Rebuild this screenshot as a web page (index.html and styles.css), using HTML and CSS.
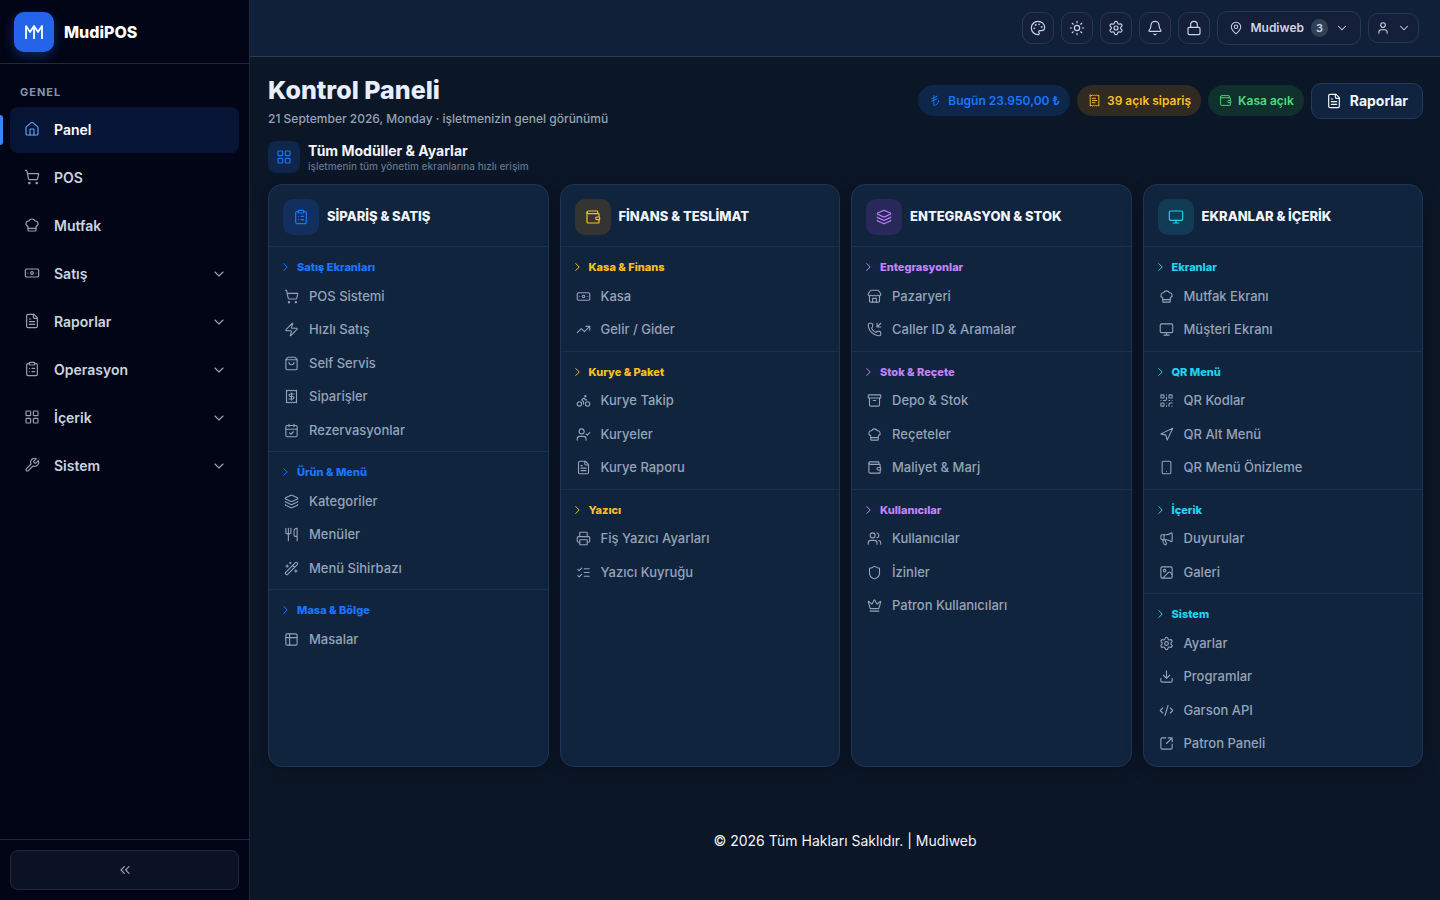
FILE: index.html
```html
<!DOCTYPE html>
<html lang="tr">
<head>
<meta charset="utf-8">
<meta name="viewport" content="width=device-width, initial-scale=1">
<title>MudiPOS – Kontrol Paneli</title>
<link rel="stylesheet" href="styles.css">
</head>
<body>
<svg class="sprite" aria-hidden="true">
  <symbol id="house" viewBox="0 0 24 24"><path d="M15 21v-8a1 1 0 0 0-1-1h-4a1 1 0 0 0-1 1v8"/><path d="M3 10a2 2 0 0 1 .709-1.528l7-5.999a2 2 0 0 1 2.582 0l7 5.999A2 2 0 0 1 21 10v9a2 2 0 0 1-2 2H5a2 2 0 0 1-2-2z"/></symbol>
  <symbol id="cart" viewBox="0 0 24 24"><circle cx="8" cy="21" r="1"/><circle cx="19" cy="21" r="1"/><path d="M2.05 2.05h2l2.66 12.42a2 2 0 0 0 2 1.58h9.78a2 2 0 0 0 1.95-1.57l1.65-7.43H5.12"/></symbol>
  <symbol id="chef" viewBox="0 0 24 24"><path d="M17 21a1 1 0 0 0 1-1v-5.35c0-.457.316-.844.727-1.041a4 4 0 0 0-2.134-7.589 5 5 0 0 0-9.186 0 4 4 0 0 0-2.134 7.588c.411.198.727.585.727 1.041V20a1 1 0 0 0 1 1Z"/><path d="M6 17h12"/></symbol>
  <symbol id="banknote" viewBox="0 0 24 24"><rect width="20" height="12" x="2" y="6" rx="2"/><circle cx="12" cy="12" r="2"/><path d="M6 12h.01M18 12h.01"/></symbol>
  <symbol id="file" viewBox="0 0 24 24"><path d="M15 2H6a2 2 0 0 0-2 2v16a2 2 0 0 0 2 2h12a2 2 0 0 0 2-2V7Z"/><path d="M14 2v4a2 2 0 0 0 2 2h4M10 9H8M16 13H8M16 17H8"/></symbol>
  <symbol id="clipboard" viewBox="0 0 24 24"><rect width="8" height="4" x="8" y="2" rx="1"/><path d="M16 4h2a2 2 0 0 1 2 2v14a2 2 0 0 1-2 2H6a2 2 0 0 1-2-2V6a2 2 0 0 1 2-2h2M12 11h4M12 16h4M8 11h.01M8 16h.01"/></symbol>
  <symbol id="grid" viewBox="0 0 24 24"><rect width="7" height="7" x="3" y="3" rx="1"/><rect width="7" height="7" x="14" y="3" rx="1"/><rect width="7" height="7" x="14" y="14" rx="1"/><rect width="7" height="7" x="3" y="14" rx="1"/></symbol>
  <symbol id="wrench" viewBox="0 0 24 24"><path d="M14.7 6.3a1 1 0 0 0 0 1.4l1.6 1.6a1 1 0 0 0 1.4 0l3.77-3.77a6 6 0 0 1-7.94 7.94l-6.91 6.91a2.12 2.12 0 0 1-3-3l6.91-6.91a6 6 0 0 1 7.94-7.94l-3.76 3.76z"/></symbol>
  <symbol id="down" viewBox="0 0 24 24"><path d="m6 9 6 6 6-6"/></symbol>
  <symbol id="right" viewBox="8 5 8 14"><path d="m9 18 6-6-6-6"/></symbol>
  <symbol id="collapse" viewBox="0 0 24 24"><path d="m11 17-5-5 5-5M18 17l-5-5 5-5"/></symbol>
  <symbol id="palette" viewBox="0 0 24 24"><path d="M12 22a1 1 0 0 1 0-20 10 9 0 0 1 10 9 5 5 0 0 1-5 5h-2.25a1.75 1.75 0 0 0-1.4 2.8l.3.4a1.75 1.75 0 0 1-1.4 2.8z"/><circle cx="13.5" cy="6.5" r=".5"/><circle cx="17.5" cy="10.5" r=".5"/><circle cx="6.5" cy="12.5" r=".5"/><circle cx="8.5" cy="7.5" r=".5"/></symbol>
  <symbol id="sun" viewBox="0 0 24 24"><circle cx="12" cy="12" r="4"/><path d="M12 2v2M12 20v2M4.93 4.93l1.41 1.41M17.66 17.66l1.41 1.41M2 12h2M20 12h2M6.34 17.66l-1.41 1.41M19.07 4.93l-1.41 1.41"/></symbol>
  <symbol id="settings" viewBox="0 0 24 24"><path d="M9.671 4.136a2.34 2.34 0 0 1 4.659 0 2.34 2.34 0 0 0 3.319 1.915 2.34 2.34 0 0 1 2.33 4.033 2.34 2.34 0 0 0 0 3.831 2.34 2.34 0 0 1-2.33 4.033 2.34 2.34 0 0 0-3.319 1.915 2.34 2.34 0 0 1-4.659 0 2.34 2.34 0 0 0-3.32-1.915 2.34 2.34 0 0 1-2.33-4.033 2.34 2.34 0 0 0 0-3.831A2.34 2.34 0 0 1 6.35 6.051a2.34 2.34 0 0 0 3.319-1.915"/><circle cx="12" cy="12" r="3"/></symbol>
  <symbol id="bell" viewBox="0 0 24 24"><path d="M10.268 21a2 2 0 0 0 3.464 0"/><path d="M3.262 15.326A1 1 0 0 0 4 17h16a1 1 0 0 0 .74-1.673C19.41 13.956 18 12.499 18 8A6 6 0 0 0 6 8c0 4.499-1.411 5.956-2.738 7.326"/></symbol>
  <symbol id="lock" viewBox="0 0 24 24"><rect width="18" height="11" x="3" y="11" rx="2"/><path d="M7 11V7a5 5 0 0 1 10 0v4"/></symbol>
  <symbol id="pin" viewBox="0 0 24 24"><path d="M20 10c0 4.993-5.539 10.193-7.399 11.799a1 1 0 0 1-1.202 0C9.539 20.193 4 14.993 4 10a8 8 0 0 1 16 0"/><circle cx="12" cy="10" r="3"/></symbol>
  <symbol id="user" viewBox="0 0 24 24"><path d="M19 21v-2a4 4 0 0 0-4-4H9a4 4 0 0 0-4 4v2"/><circle cx="12" cy="7" r="4"/></symbol>
  <symbol id="lira" viewBox="0 0 24 24"><path d="M15 4 5 9M15 8.5l-10 5M18 12a9 9 0 0 1-9 9V3"/></symbol>
  <symbol id="receipt-text" viewBox="0 0 24 24"><path d="M4 2v20l2-1 2 1 2-1 2 1 2-1 2 1 2-1 2 1V2l-2 1-2-1-2 1-2-1-2 1-2-1-2 1Z"/><path d="M14 8H8M16 12H8M13 16H8"/></symbol>
  <symbol id="receipt" viewBox="0 0 24 24"><path d="M4 2v20l2-1 2 1 2-1 2 1 2-1 2 1 2-1 2 1V2l-2 1-2-1-2 1-2-1-2 1-2-1-2 1Z"/><path d="M16 8h-6a2 2 0 1 0 0 4h4a2 2 0 1 1 0 4H8M12 17.5v-11"/></symbol>
  <symbol id="wallet" viewBox="0 0 24 24"><path d="M19 7V4a1 1 0 0 0-1-1H5a2 2 0 0 0 0 4h15a1 1 0 0 1 1 1v4h-3a2 2 0 0 0 0 4h3a1 1 0 0 0 1-1v-2a1 1 0 0 0-1-1"/><path d="M3 5v14a2 2 0 0 0 2 2h15a1 1 0 0 0 1-1v-4"/></symbol>
  <symbol id="zap" viewBox="0 0 24 24"><path d="M4 14a1 1 0 0 1-.78-1.63l9.9-10.2a.5.5 0 0 1 .86.46l-1.92 6.02A1 1 0 0 0 13 10h7a1 1 0 0 1 .78 1.63l-9.9 10.2a.5.5 0 0 1-.86-.46l1.92-6.02A1 1 0 0 0 11 14z"/></symbol>
  <symbol id="bag" viewBox="0 0 24 24"><path d="M16 10a4 4 0 0 1-8 0M3.103 6.034h17.794"/><path d="M3.4 5.467a2 2 0 0 0-.4 1.2V20a2 2 0 0 0 2 2h14a2 2 0 0 0 2-2V6.667a2 2 0 0 0-.4-1.2l-2-2.667A2 2 0 0 0 17 2H7a2 2 0 0 0-1.6.8z"/></symbol>
  <symbol id="calendar" viewBox="0 0 24 24"><path d="M8 2v4M16 2v4M3 10h18M9 16l2 2 4-4"/><rect width="18" height="18" x="3" y="4" rx="2"/></symbol>
  <symbol id="layers" viewBox="0 0 24 24"><path d="M12.83 2.18a2 2 0 0 0-1.66 0L2.6 6.08a1 1 0 0 0 0 1.83l8.58 3.91a2 2 0 0 0 1.66 0l8.58-3.9a1 1 0 0 0 0-1.83z"/><path d="M2 12a1 1 0 0 0 .58.91l8.6 3.91a2 2 0 0 0 1.65 0l8.58-3.9A1 1 0 0 0 22 12"/><path d="M2 17a1 1 0 0 0 .58.91l8.6 3.91a2 2 0 0 0 1.65 0l8.58-3.9A1 1 0 0 0 22 17"/></symbol>
  <symbol id="utensils" viewBox="0 0 24 24"><path d="M3 2v7c0 1.1.9 2 2 2h4a2 2 0 0 0 2-2V2M7 2v20M21 15V2a5 5 0 0 0-5 5v6c0 1.1.9 2 2 2h3Zm0 0v7"/></symbol>
  <symbol id="wand" viewBox="0 0 24 24"><path d="m21.64 3.64-1.28-1.28a1.21 1.21 0 0 0-1.72 0L2.36 18.64a1.21 1.21 0 0 0 0 1.72l1.28 1.28a1.2 1.2 0 0 0 1.72 0L21.64 5.36a1.2 1.2 0 0 0 0-1.72M14 7l3 3M5 6v4M19 14v4M10 2v2M7 8H3M21 16h-4M11 3H9"/></symbol>
  <symbol id="table" viewBox="0 0 24 24"><rect width="18" height="18" x="3" y="3" rx="2"/><path d="M3 9h18M9 3v18"/></symbol>
  <symbol id="trend" viewBox="0 0 24 24"><path d="M16 7h6v6"/><path d="m22 7-8.5 8.5-5-5L2 17"/></symbol>
  <symbol id="bike" viewBox="0 0 24 24"><circle cx="18.5" cy="17.5" r="3.5"/><circle cx="5.5" cy="17.5" r="3.5"/><circle cx="15" cy="5" r="1"/><path d="M12 17.5V14l-3-3 4-3 2 3h2"/></symbol>
  <symbol id="user-check" viewBox="0 0 24 24"><path d="m16 11 2 2 4-4M16 21v-2a4 4 0 0 0-4-4H6a4 4 0 0 0-4 4v2"/><circle cx="9" cy="7" r="4"/></symbol>
  <symbol id="printer" viewBox="0 0 24 24"><path d="M6 18H4a2 2 0 0 1-2-2v-5a2 2 0 0 1 2-2h16a2 2 0 0 1 2 2v5a2 2 0 0 1-2 2h-2M6 9V3a1 1 0 0 1 1-1h10a1 1 0 0 1 1 1v6"/><rect width="12" height="8" x="6" y="14" rx="1"/></symbol>
  <symbol id="checks" viewBox="0 0 24 24"><path d="m3 17 2 2 4-4M3 7l2 2 4-4M13 6h8M13 12h8M13 18h8"/></symbol>
  <symbol id="store" viewBox="0 0 24 24"><path d="M15 21v-5a1 1 0 0 0-1-1h-4a1 1 0 0 0-1 1v5"/><path d="M17.774 10.31a1.12 1.12 0 0 0-1.549 0 2.5 2.5 0 0 1-3.451 0 1.12 1.12 0 0 0-1.548 0 2.5 2.5 0 0 1-3.452 0 1.12 1.12 0 0 0-1.549 0 2.5 2.5 0 0 1-3.77-3.248l2.889-4.184A2 2 0 0 1 7 2h10a2 2 0 0 1 1.653.873l2.895 4.192a2.5 2.5 0 0 1-3.774 3.244"/><path d="M4 10.95V19a2 2 0 0 0 2 2h12a2 2 0 0 0 2-2v-8.05"/></symbol>
  <symbol id="phone" viewBox="0 0 24 24"><path d="M16 2v6h6M22 2l-6 6"/><path d="M13.832 16.568a1 1 0 0 0 1.213-.303l.355-.465A2 2 0 0 1 17 15h3a2 2 0 0 1 2 2v3a2 2 0 0 1-2 2A18 18 0 0 1 2 4a2 2 0 0 1 2-2h3a2 2 0 0 1 2 2v3a2 2 0 0 1-.8 1.6l-.468.351a1 1 0 0 0-.292 1.233 14 14 0 0 0 6.392 6.384"/></symbol>
  <symbol id="archive" viewBox="0 0 24 24"><rect width="20" height="5" x="2" y="3" rx="1"/><path d="M4 8v11a2 2 0 0 0 2 2h12a2 2 0 0 0 2-2V8M10 12h4"/></symbol>
  <symbol id="users" viewBox="0 0 24 24"><path d="M16 21v-2a4 4 0 0 0-4-4H6a4 4 0 0 0-4 4v2M16 3.128a4 4 0 0 1 0 7.744M22 21v-2a4 4 0 0 0-3-3.87"/><circle cx="9" cy="7" r="4"/></symbol>
  <symbol id="shield" viewBox="0 0 24 24"><path d="M20 13c0 5-3.5 7.5-7.66 8.95a1 1 0 0 1-.67-.01C7.5 20.5 4 18 4 13V6a1 1 0 0 1 1-1c2 0 4.5-1.2 6.24-2.72a1.17 1.17 0 0 1 1.52 0C14.51 3.81 17 5 19 5a1 1 0 0 1 1 1z"/></symbol>
  <symbol id="crown" viewBox="0 0 24 24"><path d="M11.562 3.266a.5.5 0 0 1 .876 0L15.39 8.87a1 1 0 0 0 1.516.294L21.183 5.5a.5.5 0 0 1 .798.519l-2.834 10.246a1 1 0 0 1-.956.734H5.81a1 1 0 0 1-.957-.734L2.02 6.02a.5.5 0 0 1 .798-.519l4.276 3.664a1 1 0 0 0 1.516-.294zM5 21h14"/></symbol>
  <symbol id="monitor" viewBox="0 0 24 24"><rect width="20" height="14" x="2" y="3" rx="2"/><path d="M8 21h8M12 17v4"/></symbol>
  <symbol id="qr" viewBox="0 0 24 24"><rect width="5" height="5" x="3" y="3" rx="1"/><rect width="5" height="5" x="16" y="3" rx="1"/><rect width="5" height="5" x="3" y="16" rx="1"/><path d="M21 16h-3a2 2 0 0 0-2 2v3M21 21v.01M12 7v3a2 2 0 0 1-2 2H7M3 12h.01M12 3h.01M12 16v.01M16 12h1M21 12v.01M12 21v-1"/></symbol>
  <symbol id="navigation" viewBox="0 0 24 24"><path d="m3 11 19-9-9 19-2-8z"/></symbol>
  <symbol id="phone-screen" viewBox="0 0 24 24"><rect width="14" height="20" x="5" y="2" rx="2"/><path d="M12 18h.01"/></symbol>
  <symbol id="megaphone" viewBox="0 0 24 24"><path d="M11 6a13 13 0 0 0 8.4-2.8A1 1 0 0 1 21 4v12a1 1 0 0 1-1.6.8A13 13 0 0 0 11 14H5a2 2 0 0 1-2-2V8a2 2 0 0 1 2-2z"/><path d="M6 14a12 12 0 0 0 2.4 7.2 2 2 0 0 0 3.2-2.4A8 8 0 0 1 10 14M8 6v8"/></symbol>
  <symbol id="image" viewBox="0 0 24 24"><rect width="18" height="18" x="3" y="3" rx="2"/><circle cx="9" cy="9" r="2"/><path d="m21 15-3.086-3.086a2 2 0 0 0-2.828 0L6 21"/></symbol>
  <symbol id="download" viewBox="0 0 24 24"><path d="M12 15V3M21 15v4a2 2 0 0 1-2 2H5a2 2 0 0 1-2-2v-4M7 10l5 5 5-5"/></symbol>
  <symbol id="code" viewBox="0 0 24 24"><path d="m18 16 4-4-4-4M6 8l-4 4 4 4M14.5 4l-5 16"/></symbol>
  <symbol id="external" viewBox="0 0 24 24"><path d="M21 13v6a2 2 0 0 1-2 2H5a2 2 0 0 1-2-2V5a2 2 0 0 1 2-2h6M21 3l-9 9M15 3h6v6"/></symbol>
</svg>

<div class="app">
  <aside class="sidebar">
    <div class="brand">
      <span class="brand-mark">
        <svg class="brand-icon" viewBox="0 0 20 20" aria-hidden="true"><path d="M2 17V4l4 6 4-6 4 6 4-6v13M10 17V4"/></svg>
      </span>
      <span class="brand-name">MudiPOS</span>
    </div>
    <nav class="nav" aria-label="Genel">
      <h2 class="nav-title">GENEL</h2>
      <a class="nav-item active" href="#"><svg class="icon lead"><use href="#house"/></svg><span>Panel</span></a>
      <a class="nav-item" href="#"><svg class="icon lead"><use href="#cart"/></svg><span>POS</span></a>
      <a class="nav-item" href="#"><svg class="icon lead"><use href="#chef"/></svg><span>Mutfak</span></a>
      <button class="nav-item" type="button"><svg class="icon lead"><use href="#banknote"/></svg><span>Satış</span><svg class="icon caret"><use href="#down"/></svg></button>
      <button class="nav-item" type="button"><svg class="icon lead"><use href="#file"/></svg><span>Raporlar</span><svg class="icon caret"><use href="#down"/></svg></button>
      <button class="nav-item" type="button"><svg class="icon lead"><use href="#clipboard"/></svg><span>Operasyon</span><svg class="icon caret"><use href="#down"/></svg></button>
      <button class="nav-item" type="button"><svg class="icon lead"><use href="#grid"/></svg><span>İçerik</span><svg class="icon caret"><use href="#down"/></svg></button>
      <button class="nav-item" type="button"><svg class="icon lead"><use href="#wrench"/></svg><span>Sistem</span><svg class="icon caret"><use href="#down"/></svg></button>
    </nav>
    <div class="sidebar-foot">
      <button class="collapse" type="button" aria-label="Menüyü daralt"><svg class="icon"><use href="#collapse"/></svg></button>
    </div>
  </aside>

  <div class="page">
    <header class="topbar">
      <button class="tool" type="button" aria-label="Tema rengi"><svg class="icon"><use href="#palette"/></svg></button>
      <button class="tool" type="button" aria-label="Açık tema"><svg class="icon"><use href="#sun"/></svg></button>
      <button class="tool" type="button" aria-label="Ayarlar"><svg class="icon"><use href="#settings"/></svg></button>
      <button class="tool" type="button" aria-label="Bildirimler"><svg class="icon"><use href="#bell"/></svg></button>
      <button class="tool" type="button" aria-label="Kilitle"><svg class="icon"><use href="#lock"/></svg></button>
      <button class="branch" type="button"><svg class="icon"><use href="#pin"/></svg><span>Mudiweb</span><span class="count">3</span><svg class="icon"><use href="#down"/></svg></button>
      <button class="account" type="button" aria-label="Hesap"><svg class="icon"><use href="#user"/></svg><svg class="icon"><use href="#down"/></svg></button>
    </header>

    <main class="content">
      <div class="page-head">
        <div class="page-titles">
          <h1 class="page-title">Kontrol Paneli</h1>
          <p class="page-sub">21 September 2026, Monday · işletmenizin genel görünümü</p>
        </div>
        <div class="stats">
          <span class="pill blue"><svg class="icon"><use href="#lira"/></svg>Bugün 23.950,00 ₺</span>
          <span class="pill amber"><svg class="icon"><use href="#receipt-text"/></svg>39 açık sipariş</span>
          <span class="pill green"><svg class="icon"><use href="#wallet"/></svg>Kasa açık</span>
          <a class="report" href="#"><svg class="icon"><use href="#file"/></svg>Raporlar</a>
        </div>
      </div>

      <div class="modules-head">
        <span class="modules-icon"><svg class="icon"><use href="#grid"/></svg></span>
        <div>
          <h2 class="modules-title">Tüm Modüller &amp; Ayarlar</h2>
          <p class="modules-sub">işletmenin tüm yönetim ekranlarına hızlı erişim</p>
        </div>
      </div>

      <div class="modules">
        <section class="card blue">
          <header class="card-head"><span class="card-icon"><svg class="icon"><use href="#clipboard"/></svg></span><h3 class="card-title">SİPARİŞ &amp; SATIŞ</h3></header>
          <div class="group">
            <h4 class="group-title"><svg class="icon"><use href="#right"/></svg>Satış Ekranları</h4>
            <a class="link" href="#"><svg class="icon"><use href="#cart"/></svg>POS Sistemi</a>
            <a class="link" href="#"><svg class="icon"><use href="#zap"/></svg>Hızlı Satış</a>
            <a class="link" href="#"><svg class="icon"><use href="#bag"/></svg>Self Servis</a>
            <a class="link" href="#"><svg class="icon"><use href="#receipt"/></svg>Siparişler</a>
            <a class="link" href="#"><svg class="icon"><use href="#calendar"/></svg>Rezervasyonlar</a>
          </div>
          <div class="group">
            <h4 class="group-title"><svg class="icon"><use href="#right"/></svg>Ürün &amp; Menü</h4>
            <a class="link" href="#"><svg class="icon"><use href="#layers"/></svg>Kategoriler</a>
            <a class="link" href="#"><svg class="icon"><use href="#utensils"/></svg>Menüler</a>
            <a class="link" href="#"><svg class="icon"><use href="#wand"/></svg>Menü Sihirbazı</a>
          </div>
          <div class="group">
            <h4 class="group-title"><svg class="icon"><use href="#right"/></svg>Masa &amp; Bölge</h4>
            <a class="link" href="#"><svg class="icon"><use href="#table"/></svg>Masalar</a>
          </div>
        </section>

        <section class="card amber">
          <header class="card-head"><span class="card-icon"><svg class="icon"><use href="#wallet"/></svg></span><h3 class="card-title">FİNANS &amp; TESLİMAT</h3></header>
          <div class="group">
            <h4 class="group-title"><svg class="icon"><use href="#right"/></svg>Kasa &amp; Finans</h4>
            <a class="link" href="#"><svg class="icon"><use href="#banknote"/></svg>Kasa</a>
            <a class="link" href="#"><svg class="icon"><use href="#trend"/></svg>Gelir / Gider</a>
          </div>
          <div class="group">
            <h4 class="group-title"><svg class="icon"><use href="#right"/></svg>Kurye &amp; Paket</h4>
            <a class="link" href="#"><svg class="icon"><use href="#bike"/></svg>Kurye Takip</a>
            <a class="link" href="#"><svg class="icon"><use href="#user-check"/></svg>Kuryeler</a>
            <a class="link" href="#"><svg class="icon"><use href="#file"/></svg>Kurye Raporu</a>
          </div>
          <div class="group">
            <h4 class="group-title"><svg class="icon"><use href="#right"/></svg>Yazıcı</h4>
            <a class="link" href="#"><svg class="icon"><use href="#printer"/></svg>Fiş Yazıcı Ayarları</a>
            <a class="link" href="#"><svg class="icon"><use href="#checks"/></svg>Yazıcı Kuyruğu</a>
          </div>
        </section>

        <section class="card purple">
          <header class="card-head"><span class="card-icon"><svg class="icon"><use href="#layers"/></svg></span><h3 class="card-title">ENTEGRASYON &amp; STOK</h3></header>
          <div class="group">
            <h4 class="group-title"><svg class="icon"><use href="#right"/></svg>Entegrasyonlar</h4>
            <a class="link" href="#"><svg class="icon"><use href="#store"/></svg>Pazaryeri</a>
            <a class="link" href="#"><svg class="icon"><use href="#phone"/></svg>Caller ID &amp; Aramalar</a>
          </div>
          <div class="group">
            <h4 class="group-title"><svg class="icon"><use href="#right"/></svg>Stok &amp; Reçete</h4>
            <a class="link" href="#"><svg class="icon"><use href="#archive"/></svg>Depo &amp; Stok</a>
            <a class="link" href="#"><svg class="icon"><use href="#chef"/></svg>Reçeteler</a>
            <a class="link" href="#"><svg class="icon"><use href="#wallet"/></svg>Maliyet &amp; Marj</a>
          </div>
          <div class="group">
            <h4 class="group-title"><svg class="icon"><use href="#right"/></svg>Kullanıcılar</h4>
            <a class="link" href="#"><svg class="icon"><use href="#users"/></svg>Kullanıcılar</a>
            <a class="link" href="#"><svg class="icon"><use href="#shield"/></svg>İzinler</a>
            <a class="link" href="#"><svg class="icon"><use href="#crown"/></svg>Patron Kullanıcıları</a>
          </div>
        </section>

        <section class="card cyan">
          <header class="card-head"><span class="card-icon"><svg class="icon"><use href="#monitor"/></svg></span><h3 class="card-title">EKRANLAR &amp; İÇERİK</h3></header>
          <div class="group">
            <h4 class="group-title"><svg class="icon"><use href="#right"/></svg>Ekranlar</h4>
            <a class="link" href="#"><svg class="icon"><use href="#chef"/></svg>Mutfak Ekranı</a>
            <a class="link" href="#"><svg class="icon"><use href="#monitor"/></svg>Müşteri Ekranı</a>
          </div>
          <div class="group">
            <h4 class="group-title"><svg class="icon"><use href="#right"/></svg>QR Menü</h4>
            <a class="link" href="#"><svg class="icon"><use href="#qr"/></svg>QR Kodlar</a>
            <a class="link" href="#"><svg class="icon"><use href="#navigation"/></svg>QR Alt Menü</a>
            <a class="link" href="#"><svg class="icon"><use href="#phone-screen"/></svg>QR Menü Önizleme</a>
          </div>
          <div class="group">
            <h4 class="group-title"><svg class="icon"><use href="#right"/></svg>İçerik</h4>
            <a class="link" href="#"><svg class="icon"><use href="#megaphone"/></svg>Duyurular</a>
            <a class="link" href="#"><svg class="icon"><use href="#image"/></svg>Galeri</a>
          </div>
          <div class="group">
            <h4 class="group-title"><svg class="icon"><use href="#right"/></svg>Sistem</h4>
            <a class="link" href="#"><svg class="icon"><use href="#settings"/></svg>Ayarlar</a>
            <a class="link" href="#"><svg class="icon"><use href="#download"/></svg>Programlar</a>
            <a class="link" href="#"><svg class="icon"><use href="#code"/></svg>Garson API</a>
            <a class="link" href="#"><svg class="icon"><use href="#external"/></svg>Patron Paneli</a>
          </div>
        </section>
      </div>
    </main>

    <footer class="footer">© 2026 Tüm Hakları Saklıdır. | Mudiweb</footer>
  </div>
</div>
</body>
</html>
```
FILE: styles.css
```css
* {
  box-sizing: border-box;
}

body {
  margin: 0;
  background: #0b1626;
  color: #f1f5f9;
  font-family: Inter, "Liberation Sans", sans-serif;
  font-size: 14px;
  line-height: 1.5;
}

h1, h2, h3, h4, p {
  margin: 0;
}

a {
  color: inherit;
  text-decoration: none;
}

button {
  font: inherit;
  color: inherit;
  cursor: pointer;
}

.sprite {
  display: none;
}

.icon {
  width: 16px;
  height: 16px;
  flex: none;
  fill: none;
  stroke: currentColor;
  stroke-width: 1.75;
  stroke-linecap: round;
  stroke-linejoin: round;
}

.app {
  display: flex;
  min-height: 100vh;
}

/* Sidebar */
.sidebar {
  display: flex;
  flex-direction: column;
  flex: none;
  width: 250px;
  background: #020515;
  border-right: 1px solid #1e293b;
}

.brand {
  display: flex;
  align-items: center;
  gap: 10px;
  height: 64px;
  padding: 0 14px;
  border-bottom: 1px solid #1e293b;
}

.brand-mark {
  display: grid;
  place-items: center;
  width: 40px;
  height: 40px;
  border-radius: 10px;
  background: #2563eb;
  box-shadow: 0 4px 12px rgba(37, 99, 235, 0.35);
}

.brand-icon {
  width: 20px;
  height: 20px;
  fill: none;
  stroke: #fff;
  stroke-width: 1.75;
  stroke-linejoin: round;
}

.brand-name {
  color: #fff;
  font-size: 16px;
  font-weight: 800;
}

.nav {
  display: flex;
  flex: 1;
  flex-direction: column;
  gap: 2px;
  padding: 20px 10px;
}

.nav-title {
  padding: 0 10px 5px;
  color: #8593a9;
  font-size: 11px;
  font-weight: 700;
  line-height: 16px;
  letter-spacing: 1px;
}

.nav-item {
  position: relative;
  display: flex;
  align-items: center;
  gap: 14px;
  height: 46px;
  padding: 0 12px 0 14px;
  border: 0;
  border-radius: 8px;
  background: transparent;
  color: #cbd5e1;
  font-weight: 600;
  line-height: 20px;
  text-align: left;
}

.nav-item .icon {
  color: #94a3b8;
}

.nav-item .lead {
  margin-bottom: 2px;
}

.nav-item .caret {
  margin-left: auto;
}

.nav-item.active {
  background: #061535;
  color: #fff;
}

.nav-item.active .icon {
  color: #60a5fa;
}

.nav-item.active::before {
  content: "";
  position: absolute;
  left: -10px;
  top: 8px;
  bottom: 8px;
  width: 3px;
  border-radius: 0 4px 4px 0;
  background: #3b82f6;
}

.sidebar-foot {
  padding: 10px;
  border-top: 1px solid #1e293b;
}

.collapse {
  display: grid;
  place-items: center;
  width: 100%;
  height: 40px;
  border: 1px solid #1e293b;
  border-radius: 8px;
  background: #0b1223;
  color: #94a3b8;
}

/* Top bar */
.page {
  display: flex;
  flex: 1;
  flex-direction: column;
  min-width: 0;
}

.topbar {
  display: flex;
  align-items: center;
  justify-content: flex-end;
  gap: 7px;
  height: 57px;
  padding: 0 21px;
  border-bottom: 1px solid #2c3a4f;
  background: #0f2038;
}

.tool,
.branch,
.account {
  display: flex;
  align-items: center;
  justify-content: center;
  height: 32px;
  padding: 0;
  border: 1px solid #293850;
  border-radius: 10px;
  background: #141f3a;
  color: #cbd5e1;
}

.tool {
  width: 32px;
}

.branch {
  gap: 7px;
  height: 34px;
  padding: 0 11px;
  font-size: 12px;
  font-weight: 600;
}

.branch .icon,
.account .icon {
  width: 14px;
  height: 14px;
}

.account {
  gap: 7px;
  height: 30px;
  padding: 0 7px;
}

.count {
  width: 17px;
  border-radius: 9px;
  background: #334155;
  font-size: 11px;
  line-height: 18px;
  text-align: center;
}

/* Page heading */
.content {
  padding: 15px 17px 0 18px;
}

.page-head {
  display: flex;
  align-items: center;
  justify-content: space-between;
  gap: 16px;
}

.page-title {
  color: #e8eefc;
  font-size: 25px;
  font-weight: 800;
  line-height: 36px;
}

.page-sub {
  color: #94a3b8;
  font-size: 12px;
  font-weight: 500;
  line-height: 21px;
}

.stats {
  display: flex;
  align-items: center;
  gap: 7px;
}

.pill {
  display: flex;
  align-items: center;
  gap: 6px;
  height: 31px;
  padding: 0 10px 0 11px;
  border-radius: 16px;
  font-size: 12px;
  font-weight: 600;
}

.pill .icon {
  width: 13px;
  height: 13px;
}

.pill.blue {
  background: #0d2649;
  color: #1877ff;
}

.pill.amber {
  background: #302a20;
  color: #fbbf24;
}

.pill.green {
  background: #0f302d;
  color: #4ade80;
}

.report {
  display: flex;
  align-items: center;
  gap: 8px;
  height: 36px;
  padding: 0 14px;
  border: 1px solid #1f3a63;
  border-radius: 10px;
  background: #11243f;
  font-weight: 700;
}

.modules-head {
  display: flex;
  align-items: center;
  gap: 8px;
  margin: 12px 0 11px;
}

.modules-icon {
  display: grid;
  place-items: center;
  width: 32px;
  height: 32px;
  border-radius: 8px;
  background: #0d2649;
  color: #1877ff;
}

.modules-title {
  font-size: 14px;
  font-weight: 700;
  line-height: 17px;
}

.modules-sub {
  color: #64748b;
  font-size: 10px;
  font-weight: 500;
  line-height: 14px;
}

/* Module cards */
.modules {
  display: grid;
  grid-template-columns: repeat(4, minmax(0, 1fr));
  gap: 11px;
}

.card {
  padding-bottom: 1px;
  border: 1px solid #1e3558;
  border-radius: 14px;
  background: #11243e;
  box-shadow: 0 4px 16px rgba(0, 0, 0, 0.25);
}

.card.blue {
  --accent: #1877ff;
  --tint: #122f5e;
}

.card.amber {
  --accent: #fbbf24;
  --tint: #343533;
}

.card.purple {
  --accent: #c084fc;
  --tint: #28285a;
}

.card.cyan {
  --accent: #22d3ee;
  --tint: #113a54;
}

.card-head {
  display: flex;
  align-items: center;
  gap: 8px;
  padding: 14px 14px 11px;
  border-bottom: 1px solid #1a304f;
}

.card-icon {
  display: grid;
  place-items: center;
  width: 36px;
  height: 36px;
  border-radius: 10px;
  background: var(--tint);
  color: var(--accent);
}

.card-title {
  font-size: 13px;
  font-weight: 800;
}

.group {
  padding: 12px 14px 4px;
  border-bottom: 1px solid #1a304f;
}

.group:last-child {
  border-bottom: 0;
}

.group-title {
  display: flex;
  align-items: center;
  gap: 9px;
  margin-bottom: 4px;
  color: var(--accent);
  font-size: 11px;
  font-weight: 800;
}

.group-title .icon {
  width: 5px;
  height: 8px;
}

.link {
  display: flex;
  align-items: center;
  gap: 10px;
  padding: 7px 1px;
  color: #94a3b8;
  font-size: 13px;
  font-weight: 500;
}

.link .icon {
  width: 15px;
  height: 15px;
}

.footer {
  margin-top: auto;
  padding: 48px 18px 49px;
  text-align: center;
}
```
